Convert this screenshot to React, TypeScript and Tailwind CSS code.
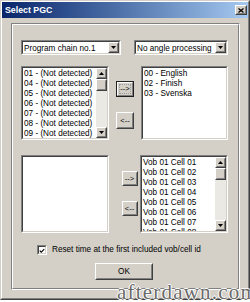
import React from "react";

const FONT = "font-['Liberation_Sans',Arial,sans-serif]";

function Sunken({ className = "", children }: { className?: string; children?: React.ReactNode }) {
  return (
    <div className={`border border-t-[#808080] border-l-[#808080] border-r-white border-b-white ${className}`}>
      <div className="h-full w-full border border-t-[#404040] border-l-[#404040] border-r-[#d4d0c8] border-b-[#d4d0c8] bg-white flex overflow-hidden">
        {children}
      </div>
    </div>
  );
}

function Raised({ className = "", children }: { className?: string; children?: React.ReactNode }) {
  return (
    <div className={`border border-t-white border-l-white border-r-[#404040] border-b-[#404040] bg-[#d4d0c8] ${className}`}>
      <div className="h-full w-full border border-t-[#d4d0c8] border-l-[#d4d0c8] border-r-[#808080] border-b-[#808080] flex items-center justify-center">
        {children}
      </div>
    </div>
  );
}

function Tri({ up = false }: { up?: boolean }) {
  return (
    <svg width="5" height="3" viewBox="0 0 5 3">
      {up ? <polygon points="0,3 5,3 2.5,0" fill="#000" /> : <polygon points="0,0 5,0 2.5,3" fill="#000" />}
    </svg>
  );
}

function Scroll() {
  return (
    <div className="w-[11px] h-full flex flex-col shrink-0">
      <Raised className="h-[11px] w-[11px]">
        <Tri up />
      </Raised>
      <Raised className="h-[12px] w-[11px]" />
      <div className="flex-1 bg-[#ebe9e4]" />
      <Raised className="h-[11px] w-[11px]">
        <Tri />
      </Raised>
    </div>
  );
}

function ListBox({ items, scroll, className = "" }: { items: string[]; scroll?: boolean; className?: string }) {
  return (
    <Sunken className={className}>
      <div className="flex-1 overflow-hidden pl-[1px] pt-[1px] text-[8.2px] leading-[10px] text-black whitespace-nowrap">
        {items.map((t) => (
          <div key={t}>{t}</div>
        ))}
      </div>
      {scroll && <Scroll />}
    </Sunken>
  );
}

function Combo({ text, className = "" }: { text: string; className?: string }) {
  return (
    <Sunken className={className}>
      <div className="flex-1 pl-[1px] text-[8.2px] leading-[13px] text-black whitespace-nowrap overflow-hidden">{text}</div>
      <Raised className="w-[11px] h-full shrink-0">
        <Tri />
      </Raised>
    </Sunken>
  );
}

function Btn({ label, def = false, className = "" }: { label: string; def?: boolean; className?: string }) {
  if (def) {
    return (
      <div className={`border border-[#202020] bg-[#d4d0c8] ${className}`}>
        <div className="h-full w-full border border-t-white border-l-white border-r-[#808080] border-b-[#808080] flex items-center justify-center">
          <div className="w-[12px] h-[10px] border border-dotted border-[#9a9a9a] flex items-center justify-center text-[7.5px] leading-[8px] whitespace-nowrap text-black">
            {label}
          </div>
        </div>
      </div>
    );
  }
  return (
    <Raised className={className}>
      <span className="text-[7.5px] leading-[8px] whitespace-nowrap">{label}</span>
    </Raised>
  );
}

export default function App() {
  const l1 = [
    "01 - (Not detected)",
    "04 - (Not detected)",
    "05 - (Not detected)",
    "06 - (Not detected)",
    "07 - (Not detected)",
    "08 - (Not detected)",
    "09 - (Not detected)",
    "10 - (Not detected)",
  ];
  const l2 = ["00 - English", "02 - Finish", "03 - Svenska"];
  const l4 = [
    "Vob 01 Cell 01",
    "Vob 01 Cell 02",
    "Vob 01 Cell 03",
    "Vob 01 Cell 04",
    "Vob 01 Cell 05",
    "Vob 01 Cell 06",
    "Vob 01 Cell 07",
    "Vob 01 Cell 08",
  ];
  return (
    <div className={`${FONT} relative w-[250px] h-[302px] bg-white overflow-hidden`}>
      <div className="w-[250px] h-[300px] bg-[#d4d0c8] border border-t-[#d4d0c8] border-l-[#d4d0c8] border-r-[#404040] border-b-[#404040]">
        <div className="h-full w-full border border-t-white border-l-white border-r-[#808080] border-b-[#808080] flex flex-col">
          {/* title bar */}
          <div className="h-[16px] bg-gradient-to-r from-[#0a246a] to-[#a6caf0] flex items-center justify-between pl-[3px] pr-[1px]">
            <span className="text-white font-bold text-[8.8px] leading-[10px]">Select PGC</span>
            <Raised className="w-[12px] h-[10px]">
              <svg width="6" height="5" viewBox="0 0 6 5">
                <path d="M0.5 0.5 L5.5 4.5 M5.5 0.5 L0.5 4.5" stroke="#000" strokeWidth="1.3" />
              </svg>
            </Raised>
          </div>
          {/* group frame */}
          <div className="mt-[5px] ml-[9px] w-[229px] h-[267px] border border-t-[#808080] border-l-[#808080] border-r-white border-b-white">
            <div className="h-full w-full border border-t-white border-l-white border-r-[#808080] border-b-[#808080] flex flex-col pl-[8px] pt-[15px]">
              <div className="flex">
                <Combo text="Program chain no.1" className="w-[100px] h-[15px]" />
                <Combo text="No angle processing" className="ml-[13px] w-[94px] h-[15px]" />
              </div>
              <div className="flex mt-[11px] h-[74px]">
                <ListBox items={l1} scroll className="w-[88px] h-[74px]" />
                <div className="w-[32px] flex flex-col items-center pt-[15px]">
                  <Btn label="-->" def className="w-[18px] h-[16px]" />
                  <Btn label="<--" className="w-[18px] h-[17px] mt-[15px]" />
                </div>
                <ListBox items={l2} className="w-[87px] h-[74px]" />
              </div>
              <div className="flex mt-[15px] h-[78px]">
                <ListBox items={[]} className="w-[88px] h-[78px]" />
                <div className="w-[31px] flex flex-col items-center pt-[16px] pl-[10px]">
                  <Btn label="-->" className="w-[16px] h-[15px]" />
                  <Btn label="<--" className="w-[16px] h-[15px] mt-[15px]" />
                </div>
                <ListBox items={l4} scroll className="w-[88px] h-[78px]" />
              </div>
              <div className="flex items-center mt-[12px] ml-[16px] h-[10px]">
                <Sunken className="w-[10px] h-[10px]">
                  <svg width="8" height="8" viewBox="0 0 8 8">
                    <path d="M1 3.5 L3 5.5 L7 1.5" stroke="#000" strokeWidth="1.5" fill="none" />
                  </svg>
                </Sunken>
                <span className="ml-[5px] text-[8.2px] leading-[10px] whitespace-nowrap">
                  Reset time at the first included vob/cell id
                </span>
              </div>
              <div className="mt-[8px] ml-[74px]">
                <Raised className="w-[58px] h-[17px]">
                  <span className="text-[8.2px] leading-[10px]">OK</span>
                </Raised>
              </div>
            </div>
          </div>
        </div>
      </div>
      <div
        className="absolute left-[117px] top-[282px] font-['Liberation_Serif',serif] text-[21px] leading-[20px] tracking-[1.2px] text-[#6a6a6a] whitespace-nowrap"
        style={{ textShadow: "1px 0 0 #fff, -1px 0 0 #fff, 0 1px 0 #fff, 0 -1px 0 #fff" }}
      >
        afterdawn.com
      </div>
    </div>
  );
}
